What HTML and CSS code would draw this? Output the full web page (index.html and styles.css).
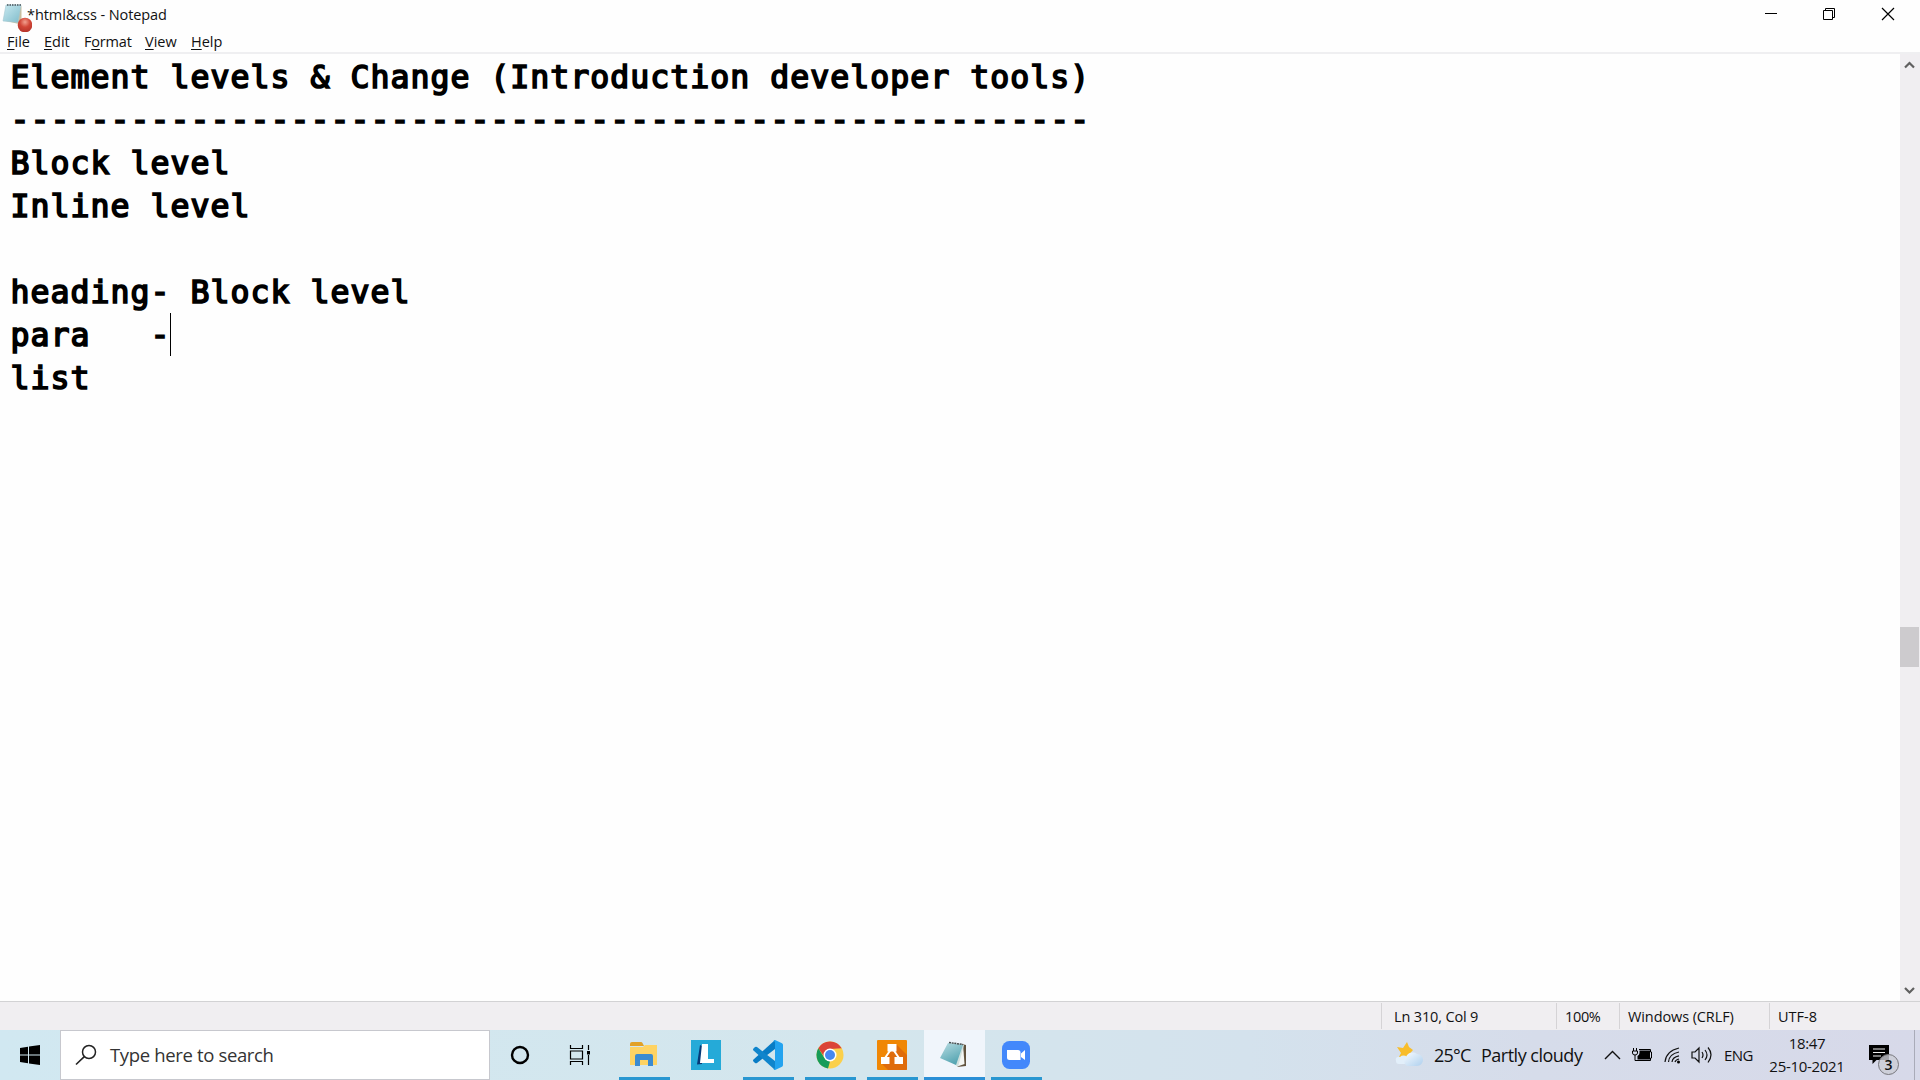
FILE: index.html
```html
<!DOCTYPE html>
<html lang="en">
<head>
<meta charset="utf-8">
<title>*html&amp;css - Notepad</title>
<link rel="stylesheet" href="styles.css">
</head>
<body>
<div class="window">
  <header class="titlebar">
    <svg class="app-icon" width="32" height="32" viewBox="0 0 32 32">
      <defs><radialGradient id="red" cx=".5" cy=".3" r=".7"><stop offset="0" stop-color="#f2a08f"/><stop offset=".5" stop-color="#d24637"/><stop offset="1" stop-color="#b5342b"/></radialGradient>
      <linearGradient id="pad" x1="0" y1="0" x2="1" y2="1"><stop offset="0" stop-color="#c9e9f0"/><stop offset="1" stop-color="#7fbccb"/></linearGradient></defs>
      <path d="M6 21l13 3 2.500-2V6z" fill="#c8bd9d"/>
      <path d="M6 5h15l-3 17.500L3 21z" fill="url(#pad)" stroke="#a2c8d2" stroke-width=".6"/>
      <path d="M7 5h14" stroke="#66757c" stroke-width="2" stroke-dasharray="1.500 1"/>
      <circle cx="25" cy="25" r="7.300" fill="url(#red)"/>
    </svg>
    <span class="title">*html&amp;css - Notepad</span>
    <div class="controls">
      <svg width="58" height="28" viewBox="0 0 58 28"><path d="M23 13.500h12" stroke="#000"/></svg>
      <svg width="58" height="28" viewBox="0 0 58 28"><path d="M23.500 10.500h9v9h-9zM25.500 10V8.500h9v9H33" fill="none" stroke="#000"/></svg>
      <svg width="60" height="28" viewBox="0 0 60 28"><path d="M24 8l12 12M36 8L24 20" stroke="#000" stroke-width="1.200"/></svg>
    </div>
  </header>
  <nav class="menu">
    <span class="m-file"><u>F</u>ile</span><span class="m-edit"><u>E</u>dit</span><span class="m-format">F<u>o</u>rmat</span><span class="m-view"><u>V</u>iew</span><span class="m-help"><u>H</u>elp</span>
  </nav>
  <main class="editor">
<pre class="text">Element levels &amp; Change (Introduction developer tools)
------------------------------------------------------
Block level
Inline level

heading- Block level
para   -<span class="caret"></span>
list</pre>
    <div class="scrollbar">
      <svg width="20" height="24" viewBox="0 0 20 24"><path d="M5 13.500L9.500 9l4.500 4.500" fill="none" stroke="#606060" stroke-width="2.200"/></svg>
      <div class="thumb"></div>
      <svg width="20" height="24" viewBox="0 0 20 24"><path d="M5 11l4.500 4.500L14 11" fill="none" stroke="#606060" stroke-width="2.200"/></svg>
    </div>
  </main>
  <footer class="status">
    <span class="s-pos">Ln 310, Col 9</span><span class="s-zoom">100%</span><span class="s-eol">Windows (CRLF)</span><span class="s-enc">UTF-8</span>
  </footer>
</div>
<div class="taskbar">
  <div class="start"><svg width="20" height="20" viewBox="0 0 20 20"><path d="M0 3l8-1.200V9.500H0zM9 1.600L20 0v9.500H9zM0 10.500h8v7.700L0 17zM9 10.500h11V20L9 18.400z"/></svg></div>
  <div class="search">
    <svg width="22" height="22" viewBox="0 0 22 22"><circle cx="14" cy="8" r="6.500" fill="none" stroke="#222" stroke-width="1.500"/><path d="M9.300 12.600L1 20.500" stroke="#222" stroke-width="1.600"/></svg>
    <span>Type here to search</span>
  </div>
  <div class="apps">
    <div class="app narrow"><svg width="20" height="20" viewBox="0 0 20 20"><circle cx="10" cy="10" r="8" fill="none" stroke="#000" stroke-width="2.400"/></svg></div>
    <div class="app view"><svg width="24" height="20" viewBox="0 0 24 20"><path d="M2.500 0v3.500h12V0M2.500 20v-3.500h12V20M2.500 6h12v8h-12zM20.500 0v5M20.500 10v10" fill="none" stroke="#000" stroke-width="1.200"/><path d="M19 6h3v3.500h-3z"/></svg></div>
    <div class="app run"><svg width="28" height="26" viewBox="0 0 28 26"><path d="M0 2q0-2 2-2h9q1 0 1.500 1L14 4H0z" fill="#e2a126"/><path d="M0 5h13l2-2h12v20H0z" fill="#fed363"/><path d="M5 24V14q0-2 2-2h14q2 0 2 2v10h-5v-6h-8v6z" fill="#3b8bd0"/></svg></div>
    <div class="app"><svg width="30" height="30" viewBox="0 0 30 30"><path d="M0 0h30v30H0z" fill="#25aad8"/><path d="M6 24.500L9 5l2 1v18z" fill="#073a78"/><path d="M11 4h6v15h6v4H9z" fill="#fff"/></svg></div>
    <div class="app run"><svg width="30" height="30" viewBox="0 0 30 30"><path d="M22 0v9L4 23q-1 .7-2 0l-1.500-1.500q-1-1 0-2z" fill="#087cc5"/><path d="M.5 10.500q-1-1 0-2L2 7q1-.7 2 0l18 14v9z" fill="#1085cc"/><path d="M22 0l7 3.300q1 .5 1 1.700v20q0 1.200-1 1.700L22 30q-1 0-1.500-1 1.500 0 1.500-1.500v-25Q22 1 20.500 1 21 0 22 0z" fill="#23a3ef"/></svg></div>
    <div class="app run"><svg width="28" height="28" viewBox="0 0 28 28"><circle cx="14" cy="14" r="13.500" fill="#fbd04b"/><path d="M2.300 7.250A13.500 13.500 0 0 1 25.700 7.250L14 8 8.500 16z" fill="#db4437"/><path d="M2.300 7.250L8.500 17 14 20.500 12 27.400A13.500 13.500 0 0 1 2.300 7.250z" fill="#169c59"/><circle cx="14" cy="14" r="6.500" fill="#fff"/><circle cx="14" cy="14" r="5" fill="#4688f1"/></svg></div>
    <div class="app run"><svg width="30" height="30" viewBox="0 0 30 30"><rect width="30" height="30" rx="1" fill="#f08705"/><path d="M19 4l11 11v14a1 1 0 0 1-1 1H11l-6-6z" fill="#df6c0c"/><path d="M13.500 10L8 18M16.500 10l5.500 8" stroke="#fff" stroke-width="2"/><path d="M10.500 4h9v7.500h-9zM4 17h8.500v7H4zM17.500 17H26v7h-8.500z" fill="#fff"/></svg></div>
    <div class="app run active"><svg width="30" height="28" viewBox="0 0 30 28"><defs><linearGradient id="note" x1="0" y1="0" x2=".5" y2="1"><stop offset="0" stop-color="#b8dce2"/><stop offset="1" stop-color="#55a5b2"/></linearGradient></defs><path d="M23 3l4 1v21l-9 1z" fill="#61533e"/><path d="M24 3l1.500 20L17 26z" fill="#f4f6f3"/><path d="M10 2l15 2-6 22-5-4z" fill="#cfe0dd"/><path d="M9 2l15 2-7 20L1 17z" fill="url(#note)"/><path d="M10 1.500l14 2" stroke="#454e50" stroke-width="1.500" stroke-dasharray="2 .7"/></svg></div>
    <div class="app run"><svg width="28" height="28" viewBox="0 0 28 28"><rect width="28" height="28" rx="7.500" fill="#4388fb"/><path d="M5 9h11q2.500 0 2.500 2.500V19h-11Q5 19 5 16.500zM19 12.500L23 9v10l-4-3z" fill="#fff"/></svg></div>
  </div>
  <div class="weather">
    <svg width="30" height="26" viewBox="0 0 30 26"><defs><linearGradient id="cl" x1="0" y1="0" x2="1" y2="1"><stop offset="0" stop-color="#f7fbff"/><stop offset="1" stop-color="#aed0ee"/></linearGradient></defs><path d="M12 0l2 5 4 3-7 8-7-1 2-4-4-6 6 1z" fill="#f8bd2b"/><path d="M1 19a3 3 0 0 1 4-4 5 5 0 0 1 7 0l4 5-4 2H4q-3 0-3-3z" fill="#e2effa"/><path d="M12 24a5.500 5.500 0 0 1-1-9 7 7 0 0 1 11-3 6 6 0 0 1 0 12z" fill="url(#cl)"/></svg>
    <span class="temp">25°C</span><span class="cond">Partly cloudy</span>
  </div>
  <div class="tray">
    <svg class="chev" width="18" height="12" viewBox="0 0 18 12"><path d="M1 10l7.500-7.500L16 10" fill="none" stroke="#111" stroke-width="1.400"/></svg>
    <svg class="batt" width="20" height="14" viewBox="0 0 20 14"><path d="M1.500 0v3M4.500 0v3M.5 3h5v2q0 2-2.500 2T.5 5zM3 7v5.500h3" fill="none" stroke="#000"/><path d="M7 1.500h11.500v2.500h1v6h-1v2.500H5.500" fill="none" stroke="#000"/><path d="M7.500 2.500H18v9H5.500V8q2-1 2-3z"/></svg>
    <svg class="wifi" width="17" height="17" viewBox="0 0 17 17"><g fill="none" stroke="#111" stroke-width="1.200"><path d="M1 15Q2 4 15 1M4.500 15Q5 7 15 5M8 15Q8.500 10 15 8.800M11 15Q11.500 13 15 12"/></g><circle cx="14.500" cy="15" r="1.500"/></svg>
    <svg class="vol" width="22" height="18" viewBox="0 0 22 18"><g fill="none" stroke="#111" stroke-width="1.200"><path d="M1 6h3l4-4v14l-4-4H1zM11 6q2 3 0 6M14 4q4 5 0 10M17 1.500q6 7 0 15"/></g></svg>
    <span class="lang">ENG</span>
    <div class="clock"><span class="time">18:47</span><span class="date">25-10-2021</span></div>
    <div class="action"><svg width="22" height="20" viewBox="0 0 22 20"><path d="M0 0h20v15H7.500L3.500 19v-4H0z"/><path d="M4 4h12M4 7.500h12M4 11h8" stroke="#eee" stroke-width="1.200"/></svg><span class="badge">3</span></div>
    <div class="peek"></div>
  </div>
</div>
</body>
</html>
```
FILE: styles.css
```css
* { box-sizing: border-box; }
body {
  margin: 0;
  width: 1920px;
  height: 1080px;
  overflow: hidden;
  display: flex;
  flex-direction: column;
  font-family: "Open Sans", "Noto Sans", sans-serif;
  color: #111;
}
svg { display: block; flex: none; }
span { white-space: nowrap; }

.window { height: 1030px; display: flex; flex-direction: column; background: #fefefe; }
.titlebar { height: 28px; display: flex; align-items: flex-start; }
.app-icon { width: 32px; margin-right: -5px; }
.title { flex: 1; font-size: 14.5px; line-height: 29px; letter-spacing: -.08px; }
.controls { display: flex; padding-right: 2px; }
.menu {
  height: 26px;
  display: flex;
  border-bottom: 2px solid #efeff1;
  font-size: 14.5px;
  line-height: 27px;
  padding-left: 7px;
}
.menu u { text-underline-offset: 2px; text-decoration-thickness: 1px; }
.m-file { width: 37px; }
.m-edit { width: 40px; }
.m-format { width: 61px; letter-spacing: -.2px; }
.m-view { width: 46px; }

.editor { flex: 1; display: flex; min-height: 0; }
.text {
  flex: 1;
  margin: 0;
  padding: 2px 0 0 10.5px;
  font-family: "DejaVu Sans Mono", monospace;
  font-size: 31.5px;
  line-height: 43px;
  letter-spacing: 1.03px;
  -webkit-text-stroke: 1.7px #000;
  color: #000;
}
.caret {
  display: inline-block;
  width: 1px;
  height: 43px;
  margin-top: -1px;
  background: #000;
  vertical-align: top;
}
.scrollbar {
  width: 20px;
  background: #f0eef1;
  display: flex;
  flex-direction: column;
  justify-content: space-between;
}
.thumb { height: 40px; width: 19px; margin-top: 239px; background: #cdcbce; }

.status {
  height: 29px;
  display: flex;
  justify-content: flex-end;
  background: #f0eef1;
  border-top: 1px solid #d2d2d4;
  font-size: 14.5px;
}
.status span { border-left: 1px solid #d5d3d6; height: 26px; margin-top: 1px; line-height: 27px; }
.s-pos { width: 175px; padding-left: 12px; letter-spacing: -.15px; }
.s-zoom { width: 63px; padding-left: 8px; letter-spacing: -.35px; }
.s-eol { width: 150px; padding-left: 8px; letter-spacing: -.1px; }
.s-enc { width: 151px; padding-left: 8px; }

.taskbar {
  height: 50px;
  display: flex;
  background: linear-gradient(90deg, #d1e8f1 0, #d4e6ed 45%, #d4e2ed 65%, #d6dcea 80%, #d7d9e9 100%);
}
.start { width: 60px; display: flex; align-items: center; justify-content: center; }
.search {
  width: 430px;
  display: flex;
  align-items: center;
  gap: 13px;
  padding: 0 0 1px 14px;
  background: #fff;
  border: 1px solid #c7c8ce;
  font-size: 18.5px;
  letter-spacing: -.35px;
  color: #333;
}
.apps { display: flex; }
.app { width: 62px; height: 50px; display: flex; align-items: center; justify-content: center; }
.app.narrow { width: 60px; }
.app.view { width: 63px; padding-right: 3px; }
.app.run {
  background: linear-gradient(#2997d1, #2997d1) 6px 47px / 51px 3px no-repeat;
}
.app.active { background: linear-gradient(#2b8fd6, #2b8fd6) 1px 47px / 61px 3px no-repeat, linear-gradient(#f0f5fb, #f0f5fb) 1px 0 / 61px 50px no-repeat; }
.weather { margin-left: 348px; display: flex; align-items: center; font-size: 18px; width: 209px; }
.temp { margin-left: 9px; width: 47px; letter-spacing: -.8px; }
.cond { letter-spacing: -.5px; }
.tray { display: flex; align-items: center; flex: 1; }
.batt { margin-left: 10px; }
.wifi { margin-left: 12px; }
.vol { margin-left: 10px; }
.lang { margin-left: 11px; font-size: 15px; width: 28px; letter-spacing: -.6px; }
.clock { margin-left: 11px; width: 88px; display: flex; flex-direction: column; align-items: center; font-size: 15px; line-height: 23px; letter-spacing: -.3px; padding-bottom: 1px; }
.action { position: relative; margin-left: 18px; }
.badge {
  position: absolute;
  left: 9px;
  top: 9px;
  width: 21px;
  height: 21px;
  border: 1px solid #77777c;
  border-radius: 50%;
  background: #cbccd5cc;
  font-size: 14px;
  font-weight: 600;
  line-height: 19px;
  text-align: center;
}
.peek { width: 1px; height: 50px; margin-left: 23px; background: #a9abb8; }
```
